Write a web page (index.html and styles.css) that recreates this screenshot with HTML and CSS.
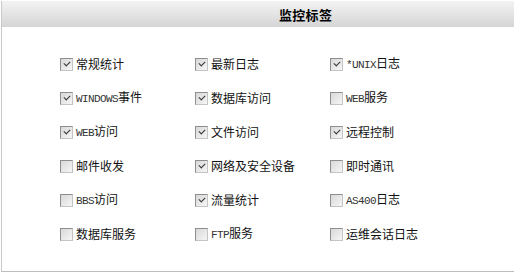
FILE: index.html
```html
<!DOCTYPE html>
<html>
<head>
<meta charset="utf-8">
<link rel="stylesheet" href="styles.css">
</head>
<body>
<div class="panel">
  <div class="head"><span class="title">监控标签</span></div>
  <div class="grid">
    <label class="item"><span class="cb on"></span><span>常规统计</span></label>
    <label class="item"><span class="cb on"></span><span>最新日志</span></label>
    <label class="item"><span class="cb on"></span><span><span class="lat">*UNIX</span>日志</span></label>

    <label class="item"><span class="cb on"></span><span><span class="lat">WINDOWS</span>事件</span></label>
    <label class="item"><span class="cb on"></span><span>数据库访问</span></label>
    <label class="item"><span class="cb"></span><span><span class="lat">WEB</span>服务</span></label>

    <label class="item"><span class="cb on"></span><span><span class="lat">WEB</span>访问</span></label>
    <label class="item"><span class="cb on"></span><span>文件访问</span></label>
    <label class="item"><span class="cb on"></span><span>远程控制</span></label>

    <label class="item"><span class="cb"></span><span>邮件收发</span></label>
    <label class="item"><span class="cb on"></span><span>网络及安全设备</span></label>
    <label class="item"><span class="cb"></span><span>即时通讯</span></label>

    <label class="item"><span class="cb"></span><span><span class="lat">BBS</span>访问</span></label>
    <label class="item"><span class="cb on"></span><span>流量统计</span></label>
    <label class="item"><span class="cb"></span><span><span class="lat">AS400</span>日志</span></label>

    <label class="item"><span class="cb"></span><span>数据库服务</span></label>
    <label class="item"><span class="cb"></span><span><span class="lat">FTP</span>服务</span></label>
    <label class="item"><span class="cb"></span><span>运维会话日志</span></label>
  </div>
</div>
</body>
</html>
```

FILE: styles.css
```css
html, body {
  margin: 0;
  padding: 0;
  background: #fff;
}
body {
  font-family: "Noto Sans CJK SC", "Noto Sans", sans-serif;
  font-size: 12px;
  color: #111;
}
.panel {
  margin-left: 1px;
  width: 512px;
  border-left: 1px solid #c9c9c9;
  border-bottom: 1px solid #bdbdbd;
}
.head {
  margin-top: 1px;
  height: 26px;
  background: linear-gradient(#f3f3f3, #d5d5d5);
  display: flex;
  align-items: center;
  padding-left: 277px;
}
.title {
  font-weight: bold;
  font-size: 13px;
  color: #000;
  letter-spacing: 0.3px;
}
.grid {
  display: grid;
  grid-template-columns: 135px 135px 135px;
  grid-auto-rows: 34px;
  padding: 20px 0 20px 58px;
}
.item {
  display: flex;
  align-items: center;
  gap: 3px;
  line-height: 14px;
}
.cb {
  box-sizing: border-box;
  width: 13px;
  height: 13px;
  border: 1px solid #8e8e8e;
  border-right-color: #c4c4c4;
  border-bottom-color: #c4c4c4;
  background: linear-gradient(135deg, #d8d8d8, #f6f6f6);
  position: relative;
  flex: none;
}
.cb.on::after {
  content: "";
  position: absolute;
  left: 3px;
  top: 2px;
  width: 5px;
  height: 3px;
  border-left: 1.5px solid #333;
  border-bottom: 1.5px solid #333;
  transform: rotate(-45deg);
}
.lat {
  font-family: "Liberation Mono", monospace;
  font-size: 11px;
  letter-spacing: -0.6px;
  color: #333;
}
```
